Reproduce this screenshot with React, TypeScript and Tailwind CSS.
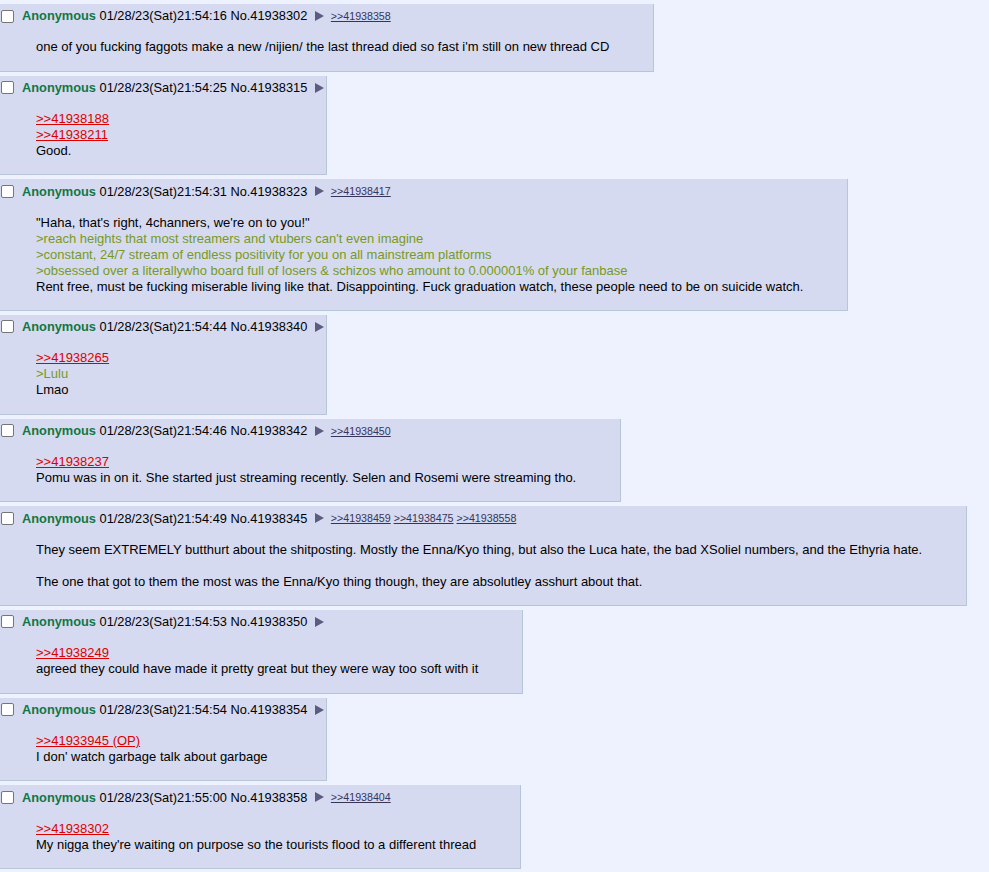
import React from "react";

type Line =
  | { t: "text"; v: string }
  | { t: "green"; v: string }
  | { t: "quote"; v: string }
  | { t: "blank" };

type Post = {
  time: string;
  no: string;
  backlinks: string[];
  body: Line[];
};

const posts: Post[] = [
  {
    time: "21:54:16",
    no: "41938302",
    backlinks: ["41938358"],
    body: [
      {
        t: "text",
        v: "one of you fucking faggots make a new /nijien/ the last thread died so fast i'm still on new thread CD",
      },
    ],
  },
  {
    time: "21:54:25",
    no: "41938315",
    backlinks: [],
    body: [
      { t: "quote", v: ">>41938188" },
      { t: "quote", v: ">>41938211" },
      { t: "text", v: "Good." },
    ],
  },
  {
    time: "21:54:31",
    no: "41938323",
    backlinks: ["41938417"],
    body: [
      { t: "text", v: "\"Haha, that's right, 4channers, we're on to you!\"" },
      { t: "green", v: ">reach heights that most streamers and vtubers can't even imagine" },
      { t: "green", v: ">constant, 24/7 stream of endless positivity for you on all mainstream platforms" },
      {
        t: "green",
        v: ">obsessed over a literallywho board full of losers & schizos who amount to 0.000001% of your fanbase",
      },
      {
        t: "text",
        v: "Rent free, must be fucking miserable living like that. Disappointing. Fuck graduation watch, these people need to be on suicide watch.",
      },
    ],
  },
  {
    time: "21:54:44",
    no: "41938340",
    backlinks: [],
    body: [
      { t: "quote", v: ">>41938265" },
      { t: "green", v: ">Lulu" },
      { t: "text", v: "Lmao" },
    ],
  },
  {
    time: "21:54:46",
    no: "41938342",
    backlinks: ["41938450"],
    body: [
      { t: "quote", v: ">>41938237" },
      {
        t: "text",
        v: "Pomu was in on it. She started just streaming recently. Selen and Rosemi were streaming tho.",
      },
    ],
  },
  {
    time: "21:54:49",
    no: "41938345",
    backlinks: ["41938459", "41938475", "41938558"],
    body: [
      {
        t: "text",
        v: "They seem EXTREMELY butthurt about the shitposting. Mostly the Enna/Kyo thing, but also the Luca hate, the bad XSoliel numbers, and the Ethyria hate.",
      },
      { t: "blank" },
      {
        t: "text",
        v: "The one that got to them the most was the Enna/Kyo thing though, they are absolutley asshurt about that.",
      },
    ],
  },
  {
    time: "21:54:53",
    no: "41938350",
    backlinks: [],
    body: [
      { t: "quote", v: ">>41938249" },
      {
        t: "text",
        v: "agreed they could have made it pretty great but they were way too soft with it",
      },
    ],
  },
  {
    time: "21:54:54",
    no: "41938354",
    backlinks: [],
    body: [
      { t: "quote", v: ">>41933945 (OP)" },
      { t: "text", v: "I don' watch garbage talk about garbage" },
    ],
  },
  {
    time: "21:55:00",
    no: "41938358",
    backlinks: ["41938404"],
    body: [
      { t: "quote", v: ">>41938302" },
      {
        t: "text",
        v: "My nigga they're waiting on purpose so the tourists flood to a different thread",
      },
    ],
  },
];

function Triangle() {
  return (
    <svg
      width="9"
      height="10"
      viewBox="0 0 9 10"
      className="inline-block ml-[4px] shrink-0"
    >
      <path d="M0 0 L9 5 L0 10 Z" fill="#5c5c80" />
    </svg>
  );
}

function PostView({ p }: { p: Post }) {
  return (
    <div className="w-fit bg-[#d6daf0] border-r border-b border-[#b7c5d9] pt-[2px] pb-[2px] pr-[2px]">
      <div className="flex items-center h-[20px] whitespace-pre text-[12.8px]">
        <span className="ml-px mr-[8px] w-[13px] h-[13px] box-border border border-[#767676] rounded-[2px] bg-white shrink-0" />
        <span className="font-bold text-[#117743]">Anonymous</span>
        <span className="text-black">{` 01/28/23(Sat)${p.time} No.${p.no} `}</span>
        <Triangle />
        {p.backlinks.length > 0 && (
          <span className="ml-[7px] text-[10.67px] text-[#34345c]">
            {p.backlinks.map((b, i) => (
              <React.Fragment key={b}>
                {i > 0 ? " " : ""}
                <span className="underline">{`>>${b}`}</span>
              </React.Fragment>
            ))}
          </span>
        )}
      </div>
      <div className="ml-[36px] mr-[42px] my-[13.33px] leading-[16px] whitespace-pre">
        {p.body.map((l, i) => {
          if (l.t === "blank") return <div key={i} className="h-[16px]" />;
          if (l.t === "quote")
            return (
              <div key={i}>
                <span className="text-[#dd0000] underline">{l.v}</span>
              </div>
            );
          if (l.t === "green")
            return (
              <div key={i} className="text-[#789922]">
                {l.v}
              </div>
            );
          return (
            <div key={i} className="text-black">
              {l.v}
            </div>
          );
        })}
      </div>
    </div>
  );
}

export default function App() {
  return (
    <div className="min-h-screen bg-[#eef2ff] pt-[4px] font-['Liberation_Sans',Arial,sans-serif] text-[13px] text-black">
      <div className="flex flex-col gap-[4px]">
        {posts.map((p) => (
          <PostView key={p.no} p={p} />
        ))}
      </div>
    </div>
  );
}
